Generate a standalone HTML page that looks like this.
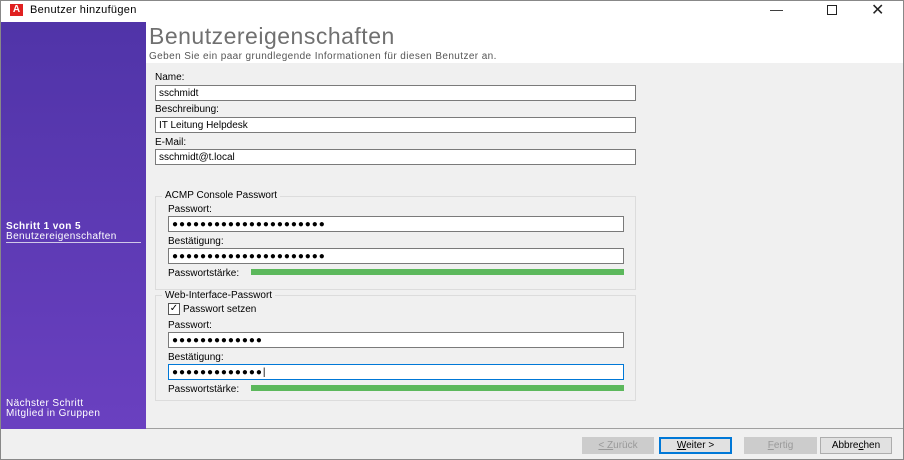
<!DOCTYPE html><html><head><style>
*{margin:0;padding:0;box-sizing:border-box}
body{width:904px;height:460px;background:#f0f0f0;font-family:"Liberation Sans",sans-serif;font-size:11px;color:#000;position:relative;overflow:hidden}
.a{position:absolute}
.win{left:0;top:0;width:904px;height:460px;border:1px solid #888}
.tb{left:1px;top:1px;width:902px;height:21px;background:#fff}
.side{left:1px;top:22px;width:145px;height:407px;background:linear-gradient(#5034a8,#6a40c0)}
.in{background:#fff;border:1px solid #7a7a7a;height:16px;padding-left:3px;font-size:10px;line-height:15px}
.lbl{font-size:10px}
.grp{border:1px solid #dcdcdc}
.gt{background:#f0f0f0;padding:0 3px;font-size:10px}
.bar{background:#5cb85c;height:6px}
.btn{top:437px;height:17px;border:1px solid #adadad;background:#e1e1e1;text-align:center;font-size:10px;line-height:15px}
.dots{letter-spacing:0.95px;font-size:10px}
.sd{color:#fff;font-size:10px;letter-spacing:0.4px}
</style></head><body>
<div class="a win"></div>
<div class="a tb"></div>
<div class="a" style="left:10px;top:4px;width:13px;height:12px;background:#e02020;color:#fff;font-weight:bold;font-size:10px;line-height:12px;text-align:center">A</div>
<div class="a" style="left:30px;top:4px;font-size:11px;letter-spacing:0.3px">Benutzer hinzufügen</div>
<div class="a" style="left:770px;top:2px;font-size:13px;color:#222">—</div>
<div class="a" style="left:827px;top:5px;width:10px;height:10px;border:1px solid #222"></div>
<div class="a" style="left:871px;top:0px;font-size:16px;color:#222">✕</div>
<div class="a side"></div>
<div class="a sd" style="left:6px;top:221px;font-weight:bold">Schritt 1 von 5</div>
<div class="a sd" style="left:6px;top:231px">Benutzereigenschaften</div>
<div class="a" style="left:6px;top:242px;width:135px;height:1px;background:#d0c8e8"></div>
<div class="a sd" style="left:6px;top:398px">Nächster Schritt</div>
<div class="a sd" style="left:6px;top:408px">Mitglied in Gruppen</div>
<div class="a" style="left:146px;top:22px;width:757px;height:41px;background:#fff"></div>
<div class="a" style="left:149px;top:23px;font-size:23px;color:#707070;letter-spacing:0.5px">Benutzereigenschaften</div>
<div class="a" style="left:149px;top:51px;font-size:10px;color:#555;letter-spacing:0.4px">Geben Sie ein paar grundlegende Informationen für diesen Benutzer an.</div>
<div class="a lbl" style="left:155px;top:72px">Name:</div>
<div class="a in" style="left:155px;top:85px;width:481px">sschmidt</div>
<div class="a lbl" style="left:155px;top:104px">Beschreibung:</div>
<div class="a in" style="left:155px;top:117px;width:481px">IT Leitung Helpdesk</div>
<div class="a lbl" style="left:155px;top:137px">E-Mail:</div>
<div class="a in" style="left:155px;top:149px;width:481px">sschmidt@t.local</div>
<div class="a grp" style="left:155px;top:196px;width:481px;height:94px"></div>
<div class="a gt" style="left:162px;top:190px">ACMP Console Passwort</div>
<div class="a lbl" style="left:168px;top:204px">Passwort:</div>
<div class="a in dots" style="left:168px;top:216px;width:456px">●●●●●●●●●●●●●●●●●●●●●●</div>
<div class="a lbl" style="left:168px;top:236px">Bestätigung:</div>
<div class="a in dots" style="left:168px;top:248px;width:456px">●●●●●●●●●●●●●●●●●●●●●●</div>
<div class="a lbl" style="left:168px;top:268px">Passwortstärke:</div>
<div class="a bar" style="left:251px;top:269px;width:373px"></div>
<div class="a grp" style="left:155px;top:295px;width:481px;height:106px"></div>
<div class="a gt" style="left:162px;top:290px">Web-Interface-Passwort</div>
<div class="a" style="left:168px;top:303px;width:12px;height:12px;border:1px solid #555;background:#fff;font-size:10px;line-height:10px;text-align:center">✓</div>
<div class="a lbl" style="left:183px;top:304px">Passwort setzen</div>
<div class="a lbl" style="left:168px;top:320px">Passwort:</div>
<div class="a in dots" style="left:168px;top:332px;width:456px">●●●●●●●●●●●●●</div>
<div class="a lbl" style="left:168px;top:352px">Bestätigung:</div>
<div class="a in dots" style="left:168px;top:364px;width:456px;border-color:#0078d7">●●●●●●●●●●●●●|</div>
<div class="a lbl" style="left:168px;top:384px">Passwortstärke:</div>
<div class="a bar" style="left:251px;top:385px;width:373px"></div>
<div class="a" style="left:146px;top:428px;width:757px;height:1px;background:#a0a0a0"></div>
<div class="a btn" style="left:582px;width:72px;color:#999;border-color:#ccc;background:#ccc"><u>&lt; Z</u>urück</div>
<div class="a btn" style="left:659px;width:73px;border:2px solid #0078d7;line-height:13px"><u>W</u>eiter &gt;</div>
<div class="a btn" style="left:744px;width:73px;color:#999;border-color:#ccc;background:#ccc"><u>F</u>ertig</div>
<div class="a btn" style="left:820px;width:72px">Abbre<u>c</u>hen</div>
</body></html>
